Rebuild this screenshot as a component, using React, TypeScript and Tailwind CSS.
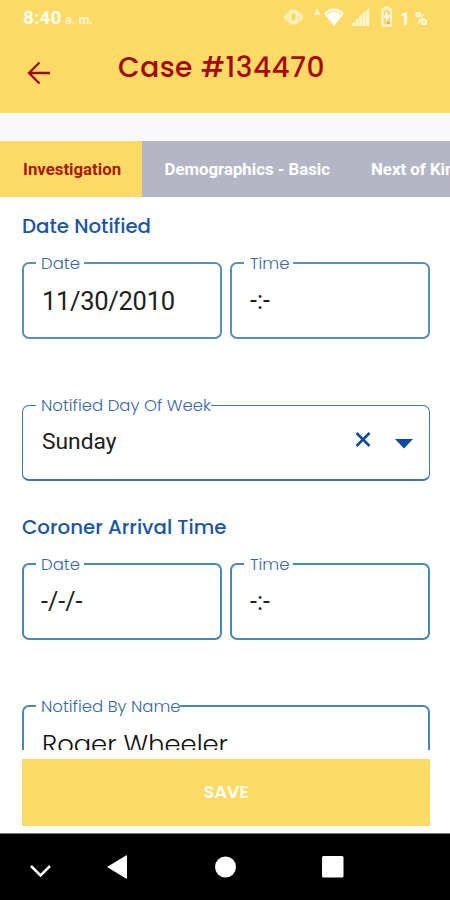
import type { ReactNode } from "react";

const geo = "font-['Poppins','Inter',sans-serif]";
const robo = "font-['Roboto',sans-serif]";

function Field({
  label,
  labelClass,
  className,
  children,
}: {
  label: string;
  labelClass: string;
  className: string;
  children?: ReactNode;
}) {
  return (
    <div className={`relative shrink-0 rounded-[7px] ${className}`}>
      <span
        className={`absolute -top-[10px] h-5 bg-white text-[16.500px] font-light leading-5 whitespace-nowrap text-[#37699f] ${geo} ${labelClass}`}
      >
        {label}
      </span>
      {children}
    </div>
  );
}

function SectionTitle({ children, className = "" }: { children: ReactNode; className?: string }) {
  return (
    <h2 className={`h-5 text-[19.800px] font-medium leading-5 whitespace-nowrap text-[#1a579f] ${geo} ${className}`}>
      {children}
    </h2>
  );
}

function StatusIcons() {
  return (
    <svg width="118" height="24" viewBox="282 6 118 24" fill="none">
      <g fill="#fff2c4">
        <path d="M293.500 9.500c3 0 5 2 5 2v11s-2 2-5 2-5-2-5-2v-11s2-2 5-2z" />
        <path d="M287.500 11.500v11l-4-5.500zM299.500 11.500v11l4-5.500z" />
      </g>
      <ellipse cx="293.500" cy="17" rx="2.200" ry="4" fill="#fdda66" />
      <path d="M317 9l3 5.500h-6z" fill="#fffdf2" />
      <path d="M324 13.500Q334 3.500 344 13.500L334 26z" fill="#fffef7" />
      <path d="M326.500 14.500Q334 8 341.500 14.500" stroke="#fbe08a" strokeWidth="1.200" />
      <g fill="#fff5d2">
        <path d="M352 26v-2.500l3-2V26zM355.700 26v-6l2.800-2v8zM359.200 26v-9.500l2.800-2.500v12zM362.700 26V13.500l2.800-2.500v15zM366.200 26V10.500l3-3V26z" />
      </g>
      <path d="M382.500 9.500h2.500v-2h3.500v2h2.500v16h-8.500z" stroke="#fff6d8" strokeWidth="2" />
      <path d="M387 11l-3.500 7h2.500v4l4-7h-2.500z" fill="#fffef5" />
      <path d="M387 22h2.500v2H387z" fill="#ef9b60" />
    </svg>
  );
}

export default function App() {
  return (
    <div className="flex h-[900px] w-[450px] flex-col overflow-hidden bg-white">
      <header className="h-[113px] shrink-0 bg-[#fdda66]">
        <div className={`flex h-9 items-center pl-[23px] text-[#fffdf0] ${robo}`}>
          <span className="w-[41px] text-[19px] font-bold leading-6 tracking-[0.1px]">8:40</span>
          <span className="w-[218px] pt-[4px] pl-px text-[12.500px] font-bold leading-5 text-[#fff6d2]">a. m.</span>
          <StatusIcons />
          <span className="pt-px text-[17.500px] font-bold leading-6 tracking-[0.200px] whitespace-nowrap">1 %</span>
        </div>
        <div className="flex h-[62px] items-center pl-[27px]">
          <svg className="mt-3 shrink-0" width="24" height="24" viewBox="0 0 24 24" fill="none" stroke="#990b0b" strokeWidth="2.300">
            <path d="M23 12H2M12.500 1.500L2 12l10.500 10.500" />
          </svg>
          <h1 className={`ml-[67px] pt-[2px] text-[28px] font-medium leading-8 tracking-[0.500px] whitespace-nowrap text-[#a40808] ${geo}`}>
            Case #134470
          </h1>
        </div>
      </header>
      <div className="h-7 shrink-0 bg-[#f9f9fb]" />
      <nav className={`flex h-14 shrink-0 items-center overflow-hidden bg-[#b5b6c5] text-[16.800px] font-bold leading-6 whitespace-nowrap text-white ${robo}`}>
        <div className="flex h-full w-[142px] shrink-0 items-center bg-[#fdda66] pb-px pl-[23px] text-[#a81a0a]">
          Investigation
        </div>
        <div className="w-[206px] shrink-0 pb-px pl-[22.500px]">Demographics - Basic</div>
        <div className="shrink-0 pb-px pl-[23px]">Next of Kin</div>
      </nav>
      <main className="h-[553px] shrink-0 overflow-hidden pt-[19px] pr-5 pl-[22px]">
        <SectionTitle>Date Notified</SectionTitle>
        <div className="mt-[26px] flex gap-2">
          <Field label="Date" labelClass="left-[12px] w-[48px] pl-[5px]" className="h-[77px] w-[200px] border-2 border-[#5b8fb7]">
            <p className={`pt-[22px] pl-[18px] text-[25.500px] leading-[30px] tracking-[-0.300px] text-[#202020] ${robo}`}>11/30/2010</p>
          </Field>
          <Field label="Time" labelClass="left-[12px] w-[49px] pl-[6px]" className="h-[77px] w-[200px] border-2 border-[#5b8fb7]">
            <p className={`pt-[22px] pl-[18px] text-[25px] leading-[30px] text-[#202020] ${robo}`}>-:-</p>
          </Field>
        </div>
        <Field label="Notified Day Of Week" labelClass="left-[13px] w-[175px] pl-[5px]" className="mt-[66px] h-[76px] w-[408px] border border-b-2 border-[#3c79aa]">
          <div className="flex pl-[19px]">
            <p className={`w-[313px] pt-[21px] text-[22.800px] leading-[30px] text-[#202020] ${robo}`}>Sunday</p>
            <svg className="mt-[25px]" width="60" height="18" viewBox="0 0 60 18">
              <path d="M1.500 2l13 13M14.500 2l-13 13" stroke="#124b9b" strokeWidth="2.600" />
              <path d="M40 8h18l-9 9.500z" fill="#0849a5" />
            </svg>
          </div>
        </Field>
        <SectionTitle className="mt-[36px]">Coroner Arrival Time</SectionTitle>
        <div className="mt-[26px] flex gap-2">
          <Field label="Date" labelClass="left-[12px] w-[48px] pl-[5px]" className="h-[77px] w-[200px] border-2 border-[#4a86b5]">
            <p className={`pt-[22px] pl-[17px] text-[25px] leading-[30px] text-[#202020] ${robo}`}>-/-/-</p>
          </Field>
          <Field label="Time" labelClass="left-[12px] w-[49px] pl-[6px]" className="h-[77px] w-[200px] border-2 border-[#4a86b5]">
            <p className={`pt-[22px] pl-[18px] text-[25px] leading-[30px] text-[#202020] ${robo}`}>-:-</p>
          </Field>
        </div>
        <Field label="Notified By Name" labelClass="left-[12px] w-[144px] pl-[5px]" className="mt-[65px] h-[77px] w-[408px] border-2 border-[#4a86b5]">
          <p className={`pt-[22px] pl-[18px] text-[25.800px] font-light leading-[30px] whitespace-nowrap text-[#101010] ${geo}`}>
            Roger Wheeler
          </p>
        </Field>
      </main>
      <div className="h-[83px] shrink-0 px-[22px] pt-[9px]">
        <button className={`flex h-[67px] w-[408px] items-center justify-center bg-[#fdda66] pb-[2px] text-[18px] font-semibold tracking-[-0.300px] text-[#fffef5] ${geo}`}>
          SAVE
        </button>
      </div>
      <footer className="h-[67px] shrink-0 border-t border-[#777] bg-black">
        <svg width="450" height="66" viewBox="0 834 450 66" fill="#fff">
          <path d="M31 866l9.500 9.500 9.500-9.500" fill="none" stroke="#fff" strokeWidth="2.500" />
          <path d="M107 867l19-11.500q1-.5 1 .5v22q0 1-1 .5z" />
          <circle cx="225.500" cy="867" r="10.500" />
          <rect x="322" y="856" width="21.500" height="21.500" rx="1.500" />
        </svg>
      </footer>
    </div>
  );
}
